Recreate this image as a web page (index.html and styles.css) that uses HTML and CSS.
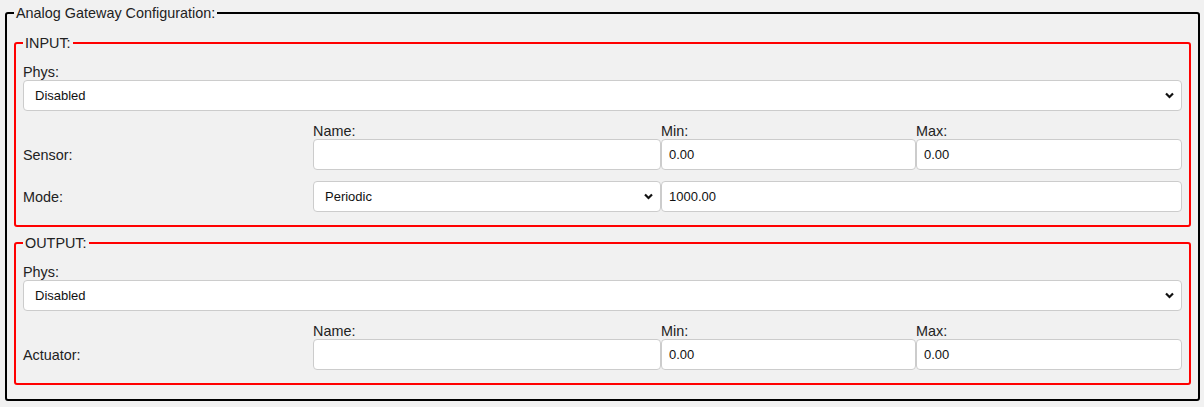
FILE: index.html
```html
<!DOCTYPE html>
<html lang="en">
<head>
<meta charset="utf-8">
<title>Analog Gateway Configuration</title>
<link rel="stylesheet" href="styles.css">
</head>
<body>
<div class="page">
  <fieldset class="cfg">
    <legend>Analog Gateway Configuration:</legend>

    <fieldset class="grp">
      <legend>INPUT:</legend>
      <label class="field-label">Phys:</label>
      <div class="select-wrap">
        <select class="ctl-select"><option>Disabled</option></select>
        <svg class="chev" width="9" height="7" viewBox="0 0 9 7"><path d="M1 1.5 L4.5 5 L8 1.5" fill="none" stroke="#111" stroke-width="2.2"/></svg>
      </div>
      <div class="grid grid-top">
        <span></span>
        <span class="cap">Name:</span>
        <span class="cap">Min:</span>
        <span class="cap">Max:</span>
        <span class="rowlabel">Sensor:</span>
        <input class="ctl" type="text" value="">
        <input class="ctl" type="text" value="0.00">
        <input class="ctl" type="text" value="0.00">
      </div>
      <div class="grid grid-next">
        <span class="rowlabel">Mode:</span>
        <div class="select-wrap">
          <select class="ctl-select"><option>Periodic</option></select>
          <svg class="chev" width="9" height="7" viewBox="0 0 9 7"><path d="M1 1.5 L4.5 5 L8 1.5" fill="none" stroke="#111" stroke-width="2.2"/></svg>
        </div>
        <input class="ctl span2" type="text" value="1000.00">
      </div>
    </fieldset>

    <fieldset class="grp">
      <legend>OUTPUT:</legend>
      <label class="field-label">Phys:</label>
      <div class="select-wrap">
        <select class="ctl-select"><option>Disabled</option></select>
        <svg class="chev" width="9" height="7" viewBox="0 0 9 7"><path d="M1 1.5 L4.5 5 L8 1.5" fill="none" stroke="#111" stroke-width="2.2"/></svg>
      </div>
      <div class="grid grid-top">
        <span></span>
        <span class="cap">Name:</span>
        <span class="cap">Min:</span>
        <span class="cap">Max:</span>
        <span class="rowlabel">Actuator:</span>
        <input class="ctl" type="text" value="">
        <input class="ctl" type="text" value="0.00">
        <input class="ctl" type="text" value="0.00">
      </div>
    </fieldset>
  </fieldset>
</div>
</body>
</html>
```

FILE: styles.css
```css
html, body {
  margin: 0;
  padding: 0;
  background: #f1f1f1;
}

body {
  font-family: "Liberation Sans", Arial, sans-serif;
  font-size: 14.4px;
  line-height: 16px;
  color: #222;
}

.page {
  padding: 5px 4px 0 5px;
}

fieldset {
  margin: 0;
  min-width: 0;
}

legend {
  padding: 0 2px;
  font-size: 14.4px;
  line-height: 16px;
  color: #222;
}

.cfg {
  border: 2px solid #000;
  border-radius: 3px;
  padding: 14px 7px 14px 7px;
}

.grp {
  border: 2px solid #ff0000;
  border-radius: 3px;
  padding: 13px 7px 13px 7px;
}

.grp + .grp {
  margin-top: 8px;
}

.field-label {
  display: block;
  line-height: 16px;
}

.select-wrap {
  position: relative;
  height: 31px;
}

.ctl-select {
  -webkit-appearance: none;
  appearance: none;
  display: block;
  width: 100%;
  height: 31px;
  box-sizing: border-box;
  margin: 0;
  padding: 0 0 0 11px;
  border: 1px solid #ccc;
  border-radius: 4px;
  background: #fff;
  font-family: "Liberation Sans", Arial, sans-serif;
  font-size: 13px;
  color: #111;
  outline: none;
}

.chev {
  position: absolute;
  right: 8px;
  top: 12px;
  pointer-events: none;
}

.grid {
  display: grid;
  grid-template-columns: 290px 348px 255px 1fr;
}

.grid-top {
  margin-top: 12px;
}

.grid-next {
  margin-top: 11px;
}

.cap {
  line-height: 16px;
}

.rowlabel {
  align-self: center;
}

.ctl {
  display: block;
  width: 100%;
  height: 31px;
  box-sizing: border-box;
  margin: 0;
  padding: 0 7px;
  border: 1px solid #ccc;
  border-radius: 4px;
  background: #fff;
  font-family: "Liberation Sans", Arial, sans-serif;
  font-size: 13px;
  color: #111;
  outline: none;
}

.span2 {
  grid-column: span 2;
}
```
